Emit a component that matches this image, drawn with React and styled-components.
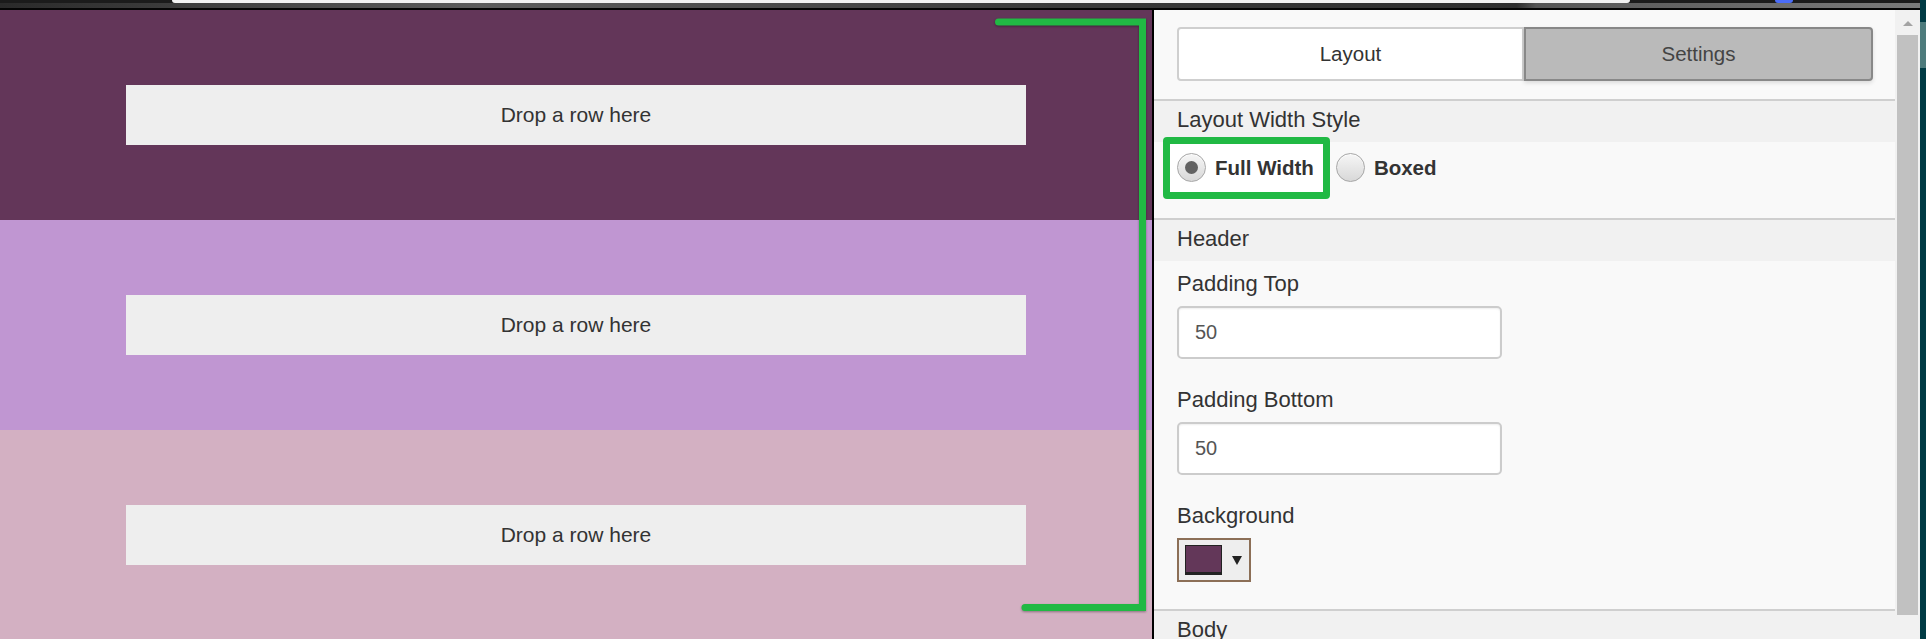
import React from "react";
import styled, { createGlobalStyle } from "styled-components";

const GlobalStyle = createGlobalStyle`
  body {
    margin: 0;
    background: #111;
    overflow: hidden;
    font-family: "Liberation Sans", Arial, sans-serif;
  }
`;

const Page = styled.div`
  width: 1926px;
  height: 639px;
  display: flex;
  overflow: hidden;
`;

const Main = styled.div`
  width: 1920px;
  display: flex;
  flex-direction: column;
`;

const EdgeStrip = styled.div`
  width: 6px;
  background: linear-gradient(
    to bottom,
    #003b44 22px,
    #4d7b7c 22px,
    #4d7b7c 68px,
    #003b44 68px
  );
`;

// browser chrome remains at top of the screenshot
const ChromeTop = styled.div`
  height: 3px;
  display: flex;
  background: #1b1b1b;
`;

const AddressBar = styled.div`
  margin-left: 172px;
  width: 1458px;
  background: #f2f2f2;
  border-radius: 0 0 6px 6px;
`;

const BlueDot = styled.div`
  margin-left: 145px;
  width: 18px;
  background: #4a6cf7;
  border-radius: 0 0 9px 9px;
`;

const ChromeBand = styled.div`
  height: 5px;
  background: linear-gradient(
    to right,
    #2a2a2a,
    #5c5c5c 25%,
    #3a3a3a 55%,
    #2e2e2e 79%,
    #555 80%,
    #7a7a7a
  );
`;

const ChromeEdge = styled.div`
  height: 2px;
  background: #050505;
`;

const Workspace = styled.div`
  flex: 1;
  min-height: 0;
  display: flex;
`;

const Canvas = styled.div`
  width: 1152px;
  position: relative;
  display: flex;
  flex-direction: column;
  overflow: hidden;
`;

const CanvasSection = styled.div`
  height: 210px;
  flex-shrink: 0;
  background: ${({ bg }) => bg};
  display: flex;
  align-items: center;
  justify-content: center;
`;

const DropZone = styled.div`
  width: 900px;
  height: 60px;
  background: #eeeeee;
  color: #333;
  font-size: 21px;
  display: flex;
  align-items: center;
  justify-content: center;
`;

const Bracket = styled.svg`
  position: absolute;
  left: 0;
  top: 0;
  pointer-events: none;
  filter: drop-shadow(0 1px 1px rgba(0, 0, 0, 0.35));
`;

const Divider = styled.div`
  width: 2px;
  background: #000;
`;

const Panel = styled.div`
  width: 741px;
  background: #f9f9f9;
  display: flex;
  flex-direction: column;
  overflow: hidden;
`;

const TabsBar = styled.div`
  padding: 17px 22px 18px 23px;
  display: grid;
  grid-template-columns: 347px 1fr;
`;

const Tab = styled.div`
  height: 54px;
  box-sizing: border-box;
  display: flex;
  align-items: center;
  justify-content: center;
  font-size: 20.5px;
  color: ${({ active }) => (active ? "#444" : "#333")};
  background: ${({ active }) => (active ? "#bababa" : "#fff")};
  border: 2px solid ${({ active }) => (active ? "#888" : "#cfcfcf")};
  border-radius: ${({ first }) => (first ? "4px 0 0 4px" : "0 4px 4px 0")};
  box-shadow: ${({ active }) =>
    active ? "0 2px 4px rgba(0,0,0,0.12)" : "none"};
`;

const Section = styled.div`
  border-top: 2px solid #cfcfcf;
`;

const SectionHeader = styled.div`
  background: #f1f1f1;
  padding: 6px 23px 9px;
  font-size: 22px;
  line-height: 26px;
  color: #333;
`;

const RadioRow = styled.div`
  display: flex;
  align-items: center;
  height: 29px;
  padding: 11px 23px 36px;
`;

const RadioOption = styled.label`
  display: flex;
  align-items: center;
  gap: 9px;
  font-size: 20.5px;
  font-weight: bold;
  color: #333;
  ${({ highlight }) =>
    highlight
      ? `
    border: 7px solid #21b944;
    border-radius: 4px;
    background: #fff;
    padding: 9px 9px 10px 7px;
    margin: -16px 6px -17px -14px;
  `
      : ""}
`;

const RadioCircle = styled.span`
  width: 29px;
  height: 29px;
  box-sizing: border-box;
  border-radius: 50%;
  border: 1px solid #a6a6a6;
  background: linear-gradient(#f6f6f6, #d8d8d8);
  box-shadow: inset 0 1px 1px rgba(255, 255, 255, 0.8);
  display: flex;
  align-items: center;
  justify-content: center;

  &::after {
    content: "";
    width: 13px;
    height: 13px;
    border-radius: 50%;
    background: #626262;
    display: ${({ checked }) => (checked ? "block" : "none")};
  }
`;

const FieldList = styled.div`
  display: flex;
  flex-direction: column;
  gap: 28px;
  padding: 10px 23px 27px;
`;

const Field = styled.div`
  display: flex;
  flex-direction: column;
  align-items: flex-start;
  gap: 9px;
`;

const FieldLabel = styled.div`
  font-size: 22px;
  line-height: 26px;
  color: #333;
`;

const TextInput = styled.input`
  width: 325px;
  height: 53px;
  box-sizing: border-box;
  border: 2px solid #cccccc;
  border-radius: 5px;
  padding: 0 16px;
  background: #fff;
  font-family: inherit;
  font-size: 20px;
  color: #555;
  box-shadow: inset 0 1px 2px rgba(0, 0, 0, 0.07);
  outline: none;
`;

const ColorPicker = styled.div`
  height: 44px;
  box-sizing: border-box;
  display: flex;
  align-items: center;
  gap: 10px;
  padding: 0 7px 0 6px;
  border: 2px solid #8c6f57;
  background: #eeeeee;
`;

const Swatch = styled.span`
  width: 37px;
  height: 30px;
  box-sizing: border-box;
  background: ${({ color }) => color};
  border: 1px solid #222;
  border-bottom-width: 3px;
`;

const DownArrow = styled.span`
  width: 0;
  height: 0;
  border-left: 5.5px solid transparent;
  border-right: 5.5px solid transparent;
  border-top: 9px solid #222;
`;

const ScrollTrack = styled.div`
  width: 25px;
  background: #f1f1f1;
  display: flex;
  flex-direction: column;
  align-items: center;
`;

const ScrollArrow = styled.span`
  margin-top: 11px;
  width: 0;
  height: 0;
  border-left: 5px solid transparent;
  border-right: 5px solid transparent;
  border-bottom: 5.5px solid #a3a3a3;
`;

const ScrollThumb = styled.div`
  margin-top: 8.5px;
  width: 21px;
  height: 580px;
  background: #c1c1c1;
`;

const sections = ["#633659", "#c096d2", "#d3b0c2"];

export default function App() {
  const [widthStyle, setWidthStyle] = React.useState("full");

  return (
    <Page>
      <GlobalStyle />
      <Main>
        <ChromeTop>
          <AddressBar />
          <BlueDot />
        </ChromeTop>
        <ChromeBand />
        <ChromeEdge />
        <Workspace>
          <Canvas>
            {sections.map((bg) => (
              <CanvasSection key={bg} bg={bg}>
                <DropZone>Drop a row here</DropZone>
              </CanvasSection>
            ))}
            <Bracket width="1152" height="629">
              <path
                d="M998.5 12 H1142.5 V597.5 H1025"
                fill="none"
                stroke="#21b944"
                strokeWidth="7"
                strokeLinecap="round"
              />
            </Bracket>
          </Canvas>
          <Divider />
          <Panel>
            <TabsBar>
              <Tab first>Layout</Tab>
              <Tab active>Settings</Tab>
            </TabsBar>
            <Section>
              <SectionHeader>Layout Width Style</SectionHeader>
              <RadioRow>
                <RadioOption highlight onClick={() => setWidthStyle("full")}>
                  <RadioCircle checked={widthStyle === "full"} />
                  Full Width
                </RadioOption>
                <RadioOption onClick={() => setWidthStyle("boxed")}>
                  <RadioCircle checked={widthStyle === "boxed"} />
                  Boxed
                </RadioOption>
              </RadioRow>
            </Section>
            <Section>
              <SectionHeader>Header</SectionHeader>
              <FieldList>
                <Field>
                  <FieldLabel>Padding Top</FieldLabel>
                  <TextInput defaultValue="50" />
                </Field>
                <Field>
                  <FieldLabel>Padding Bottom</FieldLabel>
                  <TextInput defaultValue="50" />
                </Field>
                <Field>
                  <FieldLabel>Background</FieldLabel>
                  <ColorPicker>
                    <Swatch color="#633759" />
                    <DownArrow />
                  </ColorPicker>
                </Field>
              </FieldList>
            </Section>
            <Section>
              <SectionHeader>Body</SectionHeader>
            </Section>
          </Panel>
          <ScrollTrack>
            <ScrollArrow />
            <ScrollThumb />
          </ScrollTrack>
        </Workspace>
      </Main>
      <EdgeStrip />
    </Page>
  );
}
